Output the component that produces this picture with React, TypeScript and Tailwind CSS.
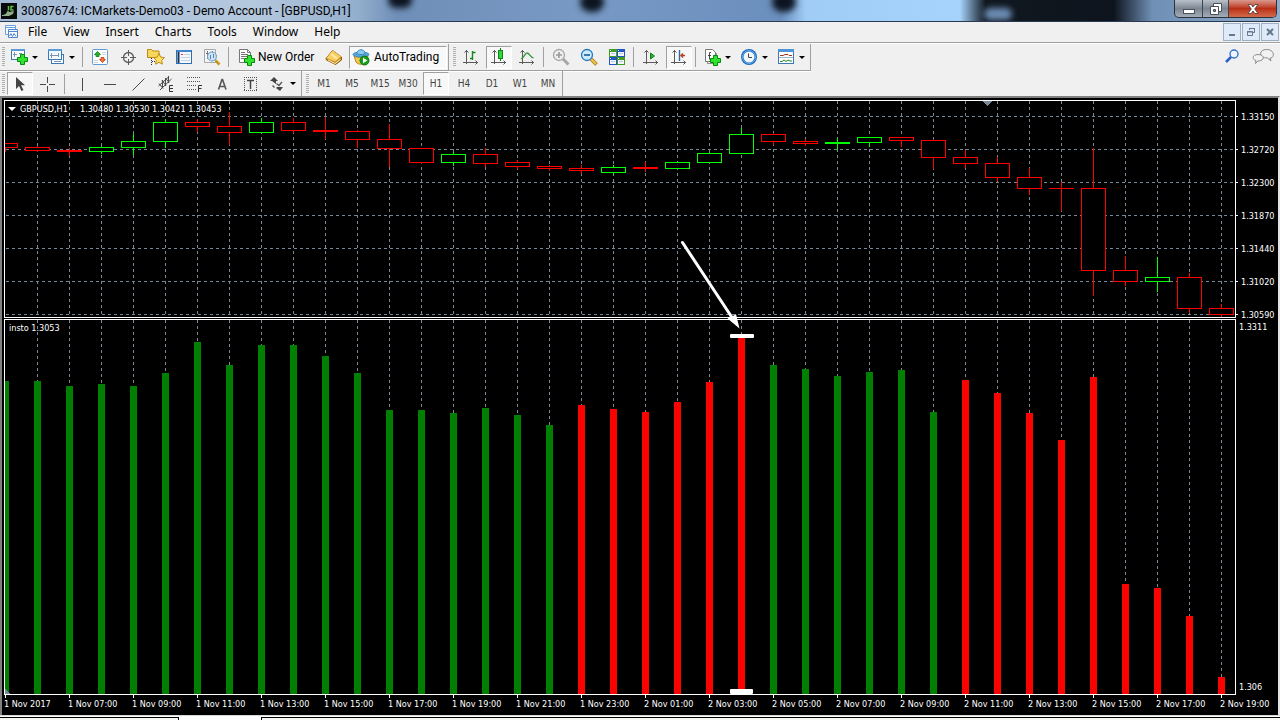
import type { ReactNode } from 'react';
import { clsx } from 'clsx';

// [direction, high, top, bottom, low], in plot pixels
type Candle = ['up' | 'down', number, number, number, number];

const CANDLES: Candle[] = [
  ['down', 143, 143, 147, 151],
  ['down', 146, 147, 150, 151],
  ['down', 148, 150, 151, 155],
  ['up', 146, 147, 151, 153],
  ['up', 134, 141, 147, 154],
  ['up', 119, 122, 141, 147],
  ['down', 119, 122, 126, 131],
  ['down', 112, 126, 132, 144],
  ['up', 118, 122, 132, 132],
  ['down', 118, 122, 130, 132],
  ['down', 117, 130, 131, 138],
  ['down', 130, 131, 139, 147],
  ['down', 124, 139, 148, 166],
  ['down', 148, 148, 162, 163],
  ['up', 152, 154, 162, 165],
  ['down', 148, 154, 163, 166],
  ['down', 160, 162, 166, 168],
  ['down', 165, 166, 168, 170],
  ['down', 165, 168, 170, 173],
  ['up', 165, 167, 172, 174],
  ['down', 162, 167, 168, 171],
  ['up', 162, 162, 168, 168],
  ['up', 152, 153, 162, 162],
  ['up', 128, 134, 153, 153],
  ['down', 133, 134, 141, 144],
  ['down', 139, 141, 143, 145],
  ['up', 138, 142, 143, 149],
  ['up', 137, 137, 142, 146],
  ['down', 137, 137, 140, 146],
  ['down', 139, 140, 157, 168],
  ['down', 150, 157, 163, 167],
  ['down', 157, 163, 177, 180],
  ['down', 168, 177, 188, 194],
  ['down', 182, 188, 188, 210],
  ['down', 148, 188, 270, 295],
  ['down', 256, 270, 281, 285],
  ['up', 257, 277, 281, 291],
  ['down', 273, 277, 308, 312],
  ['down', 304, 308, 314, 316],
];

const BAR_TOPS = [
  381, 381, 386, 384, 386, 373, 342, 365, 345, 345, 356, 373, 410, 410, 413,
  408, 415, 425, 405, 409, 412, 402, 382, 337, 365, 369, 376, 372, 370, 412,
  380, 393, 413, 440, 377, 584, 588, 616, 677,
];

const PRICES = ['1.33150', '1.32720', '1.32300', '1.31870', '1.31440', '1.31020', '1.30590'];

const TIMES = [
  '1 Nov 2017', '1 Nov 07:00', '1 Nov 09:00', '1 Nov 11:00', '1 Nov 13:00',
  '1 Nov 15:00', '1 Nov 17:00', '1 Nov 19:00', '1 Nov 21:00', '1 Nov 23:00',
  '2 Nov 01:00', '2 Nov 03:00', '2 Nov 05:00', '2 Nov 07:00', '2 Nov 09:00',
  '2 Nov 11:00', '2 Nov 13:00', '2 Nov 15:00', '2 Nov 17:00', '2 Nov 19:00',
];

const MENUS = ['File', 'View', 'Insert', 'Charts', 'Tools', 'Window', 'Help'];
const PERIODS = ['M1', 'M5', 'M15', 'M30', 'H1', 'H4', 'D1', 'W1', 'MN'];

const isRed = (i: number) => (i >= 18 && i <= 23) || i >= 30;

function Icon({ children }: { children: ReactNode }) {
  return (
    <svg width="18" height="18" viewBox="0 0 18 18" fill="none" className="shrink-0" aria-hidden="true">
      {children}
    </svg>
  );
}

function Plus({ x, y }: { x: number; y: number }) {
  return (
    <path
      transform={`translate(${x} ${y})`}
      d="M3.5.5h4v3h3v4h-3v3h-4v-3h-3v-4h3z"
      fill="#2fe32f"
      stroke="#068a0c"
    />
  );
}

function Axes() {
  return <path d="M4.5 2v14M1 14.5h15M2.5 4.5l2-2 2 2M13.5 12.5l2 2-2 2" stroke="#5a5a5a" />;
}

const icons = {
  newChart: (
    <Icon>
      <rect x="1.5" y="1.5" width="13" height="10" fill="#fff" stroke="#3a78b8" />
      <path d="M1 2h14" stroke="#5b9bd8" strokeWidth="2" />
      <path d="M4.5 4v5M3 6.5h4M9 5.5h3" stroke="#7a94ae" />
      <Plus x={7} y={6} />
    </Icon>
  ),
  profiles: (
    <Icon>
      <rect x="4.5" y="6.5" width="12" height="9" fill="#fff" stroke="#3a78b8" />
      <rect x="1.5" y="1.5" width="13" height="10" fill="#f4f9ff" stroke="#3a78b8" />
      <path d="M1 2h14" stroke="#5b9bd8" strokeWidth="2" />
      <path d="M4.5 5v5M3 7.5h9M11.5 5v4M7 13.5h7" stroke="#7a94ae" />
    </Icon>
  ),
  marketWatch: (
    <Icon>
      <rect x="1.5" y="1.5" width="15" height="15" rx="1" fill="#fff" stroke="#5a9bd8" />
      <path d="M11 4.5h4M11 6.5h4M3 12.5h4M3 14.5h4" stroke="#cfd6dd" />
      <path d="M6.5 3.5L9.500 6.5H8v2H5v-2H3.500z" fill="#27b52b" stroke="#0f7f14" strokeWidth=".8" />
      <path d="M11.5 14.5l-3-3H10v-2h3v2h1.500z" fill="#f2733a" stroke="#c0431a" strokeWidth=".8" />
    </Icon>
  ),
  dataWindow: (
    <Icon>
      <circle cx="9.5" cy="9.5" r="5" stroke="#5c5c5c" strokeWidth="1.3" />
      <path d="M9.500 2v6M9.500 11v6M2 9.500h6M11 9.500h6" stroke="#5c5c5c" />
    </Icon>
  ),
  navigator: (
    <Icon>
      <path d="M.5 9.500v-8h4L6 3h6v6.500z" fill="#f7d65c" stroke="#b98a14" />
      <path d="M4.500 10v7M5 13.500h3" stroke="#333" strokeDasharray="1 1" />
      <path
        d="M12 5.500l1.700 3.600 3.800.5-2.800 2.700.7 3.900-3.400-1.900-3.400 1.900.7-3.900-2.800-2.700 3.800-.5z"
        fill="#ffe064"
        stroke="#c08a18"
      />
    </Icon>
  ),
  terminal: (
    <Icon>
      <rect x="1.5" y="2.5" width="15" height="13" fill="#f4f8fd" stroke="#2f6fb4" />
      <path d="M2 3h14" stroke="#3f86cf" strokeWidth="2" />
      <path d="M3.500 4v11" stroke="#16355c" strokeWidth="2" />
      <path d="M6 6.500h2" stroke="#e03030" />
      <path d="M9 6.500h6M6 9.500h9M6 12.500h9" stroke="#c5d1df" />
    </Icon>
  ),
  tester: (
    <Icon>
      <path d="M1.5 1.5h11v13h-11z" fill="#f5f5f5" stroke="#a8a8a8" />
      <path d="M4.5 3v8M3 5.500h3M9.500 3v3" stroke="#777" />
      <path d="M12.500 12.500l4 4" stroke="#c8941c" strokeWidth="2.5" />
      <circle cx="9" cy="8.500" r="4.500" fill="#c5e2fa" fillOpacity=".85" stroke="#6b9cc8" />
      <path d="M7.500 7v4M10.500 6v4" stroke="#5b88ae" />
    </Icon>
  ),
  newOrder: (
    <Icon>
      <path d="M1.500 1.500h8l3 3v10h-11z" fill="#fff" stroke="#777" />
      <path d="M9.500 1.500v3h3" stroke="#777" />
      <path d="M3 4.500h4M3 6.500h7M3 8.500h6M3 10.500h3" stroke="#777" />
      <Plus x={6} y={7} />
    </Icon>
  ),
  metaEditor: (
    <Icon>
      <path d="M1 10.500L7.500 2.500 16.500 9v3l-6 4.500L1.500 12z" fill="#c98b1a" stroke="#8e5a0a" />
      <path d="M1.500 10l6-7.500 8.500 6-6 5z" fill="#f7cf63" />
      <path d="M3 12l7 3.500 5.500-4.200" stroke="#fff3c4" />
      <path d="M6 6l6.500 5" stroke="#ffe9a6" strokeWidth="2" />
    </Icon>
  ),
  autoTrading: (
    <Icon>
      <path d="M2 8c3 2 11 2 14 0l-2 6c-2 3-8 3-10 0z" fill="#f2ca4e" stroke="#b98c1c" />
      <ellipse cx="9" cy="6.500" rx="8" ry="2.500" fill="#57a6dd" stroke="#3f89c3" />
      <path d="M5 5.500c0-5 8-5 8 0-2 1.500-6 1.500-8 0z" fill="#8accf2" stroke="#3f89c3" />
      <circle cx="12.500" cy="12.500" r="4.500" fill="#18a01c" stroke="#0c7410" />
      <path d="M11 9.700l4.300 2.800-4.300 2.800z" fill="#fff" />
    </Icon>
  ),
  bars: (
    <Icon>
      <Axes />
      <path d="M10.500 3v9M10.500 4.500h3M8 10.500h2.500" stroke="#138a1b" strokeWidth="1.4" />
    </Icon>
  ),
  candles: (
    <Icon>
      <Axes />
      <path d="M10.500 0v13" stroke="#0c7a14" />
      <rect x="8.500" y="2.500" width="4" height="8" fill="#33d43b" stroke="#0c8a14" />
    </Icon>
  ),
  line: (
    <Icon>
      <Axes />
      <path d="M3 11c3-1 4-6 6-6 2.500 0 3 4 6.500 5" stroke="#2f9a36" strokeWidth="1.3" />
    </Icon>
  ),
  zoomIn: (
    <Icon>
      <path d="M11 11l5.500 5.500" stroke="#a6a6a6" strokeWidth="3" />
      <circle cx="7" cy="7" r="5.500" fill="#eee" stroke="#a6a6a6" strokeWidth="1.3" />
      <path d="M4 7h6M7 4v6" stroke="#9a9a9a" strokeWidth="1.6" />
    </Icon>
  ),
  zoomOut: (
    <Icon>
      <path d="M11 11l5.500 5.500" stroke="#a97813" strokeWidth="3.5" />
      <path d="M11 11l5 5" stroke="#f3c948" strokeWidth="1.8" />
      <circle cx="7" cy="7" r="5.500" fill="#cbeafd" stroke="#2678bd" strokeWidth="1.3" />
      <path d="M4 7h6" stroke="#2b6ea6" strokeWidth="1.8" />
    </Icon>
  ),
  tile: (
    <Icon>
      <rect x="1" y="1" width="8" height="8" fill="#3f9e1f" />
      <rect x="9" y="1" width="8" height="8" fill="#2455c4" />
      <rect x="1" y="9" width="8" height="8" fill="#2455c4" />
      <rect x="9" y="9" width="8" height="8" fill="#3f9e1f" />
      <path d="M2 4h6v4H2zM10 4h6v4h-6zM2 12h6v4H2zM10 12h6v4h-6z" fill="#f2f6fb" />
      <path d="M3 5.500h4M11 5.500h4M3 13.500h4M11 13.500h4" stroke="#b9c8da" />
      <path d="M2 2.500h1M10 2.500h1M2 10.500h1M10 10.500h1" stroke="#fff" />
    </Icon>
  ),
  autoScroll: (
    <Icon>
      <Axes />
      <path d="M8.500 5v6l4-3z" fill="#27b52b" stroke="#128018" />
    </Icon>
  ),
  shift: (
    <Icon>
      <Axes />
      <path d="M9.500 2v11" stroke="#2a6aa8" strokeWidth="1.4" />
      <path d="M15 7.500h-4M13 5.500l-2 2 2 2" stroke="#b5401c" strokeWidth="1.4" />
    </Icon>
  ),
  indicators: (
    <Icon>
      <path d="M4.500 3.500h7l2 2v10h-9z" fill="#eee" stroke="#8c8c8c" />
      <path d="M2.500 1.500h7l3 3v9h-10z" fill="#fff" stroke="#777" />
      <path d="M8 4.500H6.500v7M5 7.500h3" stroke="#444" />
      <Plus x={7} y={7} />
    </Icon>
  ),
  clock: (
    <Icon>
      <circle cx="9" cy="9" r="8" fill="#1c67bd" />
      <circle cx="9" cy="9" r="6.500" stroke="#5db0f2" />
      <circle cx="9" cy="9" r="5.500" fill="#f2f7fc" />
      <path d="M8.500 5.500v4H12" stroke="#444" />
    </Icon>
  ),
  template: (
    <Icon>
      <rect x="1.5" y="1.5" width="15" height="14" fill="#fff" stroke="#3a78b8" />
      <path d="M1 2.500h16" stroke="#4d94d8" strokeWidth="3" />
      <path d="M3 7.500h3l2-1h3l1 1h3" stroke="#a33420" />
      <path d="M2 9.500h14" stroke="#9db4cc" />
      <path d="M3 13.500h2l2-1.500 2 1.500 2-1.500 2 1h2" stroke="#278a2c" />
    </Icon>
  ),
  pointer: (
    <Icon>
      <path d="M5 2v12l3-3 2.500 5 2-1-2.500-4.800h4z" fill="#444" />
    </Icon>
  ),
  cross: (
    <Icon>
      <path d="M8.500 2v6M8.500 11v6M1 9.500h6M10 9.500h6" stroke="#4a4a4a" />
    </Icon>
  ),
  vline: (
    <Icon>
      <path d="M9.500 3v13" stroke="#4a4a4a" />
    </Icon>
  ),
  hline: (
    <Icon>
      <path d="M3 9.500h12" stroke="#4a4a4a" />
    </Icon>
  ),
  trend: (
    <Icon>
      <path d="M3.500 15.500l12-12" stroke="#4a4a4a" />
    </Icon>
  ),
  channel: (
    <Icon>
      <path d="M1.500 11l10-9M3 15L14.500 4M2 8.500l4 5M5 5.500l4 5M8.500 3l3.500 4.500M5.500 5v8M8.500 3v8M11.500 1v7" stroke="#4a4a4a" />
      <path d="M16 10.500h-3.500v6H16M12.500 13.500H16" stroke="#333" />
    </Icon>
  ),
  fibo: (
    <Icon>
      <path d="M2 2.500h14M2 6.500h14M2 10.500h9M2 14.500h9" stroke="#555" strokeDasharray="1 1" />
      <path d="M13.500 17v-6.500H17M13.500 13.500h3" stroke="#333" />
    </Icon>
  ),
  text: (
    <Icon>
      <path d="M5.500 14.500L9 4.500h.5l3.500 10M6.500 11.500H12" stroke="#555" strokeWidth="1.6" />
    </Icon>
  ),
  label: (
    <Icon>
      <path d="M3 2.500h13M3 15.500h13M3.500 2v14M15.500 2v14" stroke="#555" strokeDasharray="1 1" />
      <path d="M6 5.500h7M9.500 5v9" stroke="#444" strokeWidth="1.5" />
    </Icon>
  ),
  arrows: (
    <Icon>
      <path d="M2 6l4-4 4 4H8v3L4 6z" fill="#444" />
      <path d="M9 12h6l-3 4-4-3z" fill="#444" />
      <path d="M4.500 10.500l2 2M8.500 8.500l2.500 2 3-3.500" stroke="#555" strokeWidth="1.3" />
    </Icon>
  ),
};

type IconName = keyof typeof icons;

const Caret = () => (
  <svg width="6" height="3" viewBox="0 0 6 3" className="shrink-0" aria-hidden="true">
    <path d="M0 0h6L3 3z" fill="#000" />
  </svg>
);

const PRESSED = 'border border-t-[#a0a0a0] border-l-[#a0a0a0] border-r-white border-b-white bg-[#f8f8f8]';

function Tool({ name, label, pressed }: { name: IconName; label: string; pressed?: boolean }) {
  return (
    <button
      aria-label={label}
      className={clsx(
        'flex h-[23px] items-center justify-center',
        pressed ? 'mx-px w-[26px]' : 'w-7',
        pressed && PRESSED,
      )}
    >
      {icons[name]}
    </button>
  );
}

function DropTool({ name, label }: { name: IconName; label: string }) {
  return (
    <button aria-label={label} className="flex h-[23px] w-[37px] items-center gap-1 pl-1">
      {icons[name]}
      <Caret />
    </button>
  );
}

const Sep = () => <span className="ml-[2px] mr-[3px] h-5 w-px bg-[#a0a0a0]" />;
const Grip = () => (
  <span className="mr-px ml-[2px] h-5 w-[3px] bg-[repeating-linear-gradient(#b0b0b0_0_1px,#f0f0f0_1px_2px)]" />
);

function TitleBar() {
  return (
    <header className="relative flex h-[22px] items-center overflow-hidden border-b border-[#2a3a52] bg-[linear-gradient(90deg,#a4bad4_0,#b4c8de_20%,#93aecd_28%,#6f8fb8_31%,#7899c4_45%,#6b8fbe_61%,#a0cdf6_63%,#a6d3fb_75%,#101820_77%,#0d141d_87%,#6f8fb5_90%,#8fabc9_100%)]">
      {/* dark wedges between the blurred tabs behind the glass */}
      <span className="absolute top-[-8px] left-[388px] h-4 w-6 rounded-full bg-[#0c1420] blur-[3px]" />
      <span className="absolute top-[-8px] left-[580px] h-5 w-6 rounded-full bg-[#0c1420] blur-[3px]" />
      <span className="absolute top-[-8px] left-[772px] h-5 w-6 rounded-full bg-[#0c1420] blur-[3px]" />
      <span className="absolute top-[8px] left-[984px] h-3 w-7 rounded-full bg-[#6d8db5] blur-[3px]" />
      <svg width="16" height="16" viewBox="0 0 16 16" className="relative ml-px" aria-hidden="true">
        <rect width="16" height="16" fill="#080a08" />
        <path d="M1 12c3 0 5-2 6-5l1 2 5-1-1 3-4 2H1z" fill="#8fae8a" />
        <path d="M7.500 3v4M12.500 3.500H10v3.500h2.500" stroke="#5fc04a" strokeWidth="1.5" fill="none" />
      </svg>
      <h1 className="relative ml-1 flex-1 font-[Roboto,'Open_Sans',sans-serif] text-[12px] leading-5 whitespace-nowrap text-black">
        30087674: ICMarkets-Demo03 - Demo Account - [GBPUSD,H1]
      </h1>
      <div className="relative mr-[3px] flex h-[18px] self-start overflow-hidden rounded-b-[5px] border border-t-0 border-[#2c323a] bg-gradient-to-b from-[#b9c1ca] via-[#7d8793] to-[#a2adb8]">
        <button aria-label="Minimize" className="flex w-7 items-center justify-center border-r border-[#3b434d]">
          <svg width="12" height="12" viewBox="0 0 12 12" aria-hidden="true">
            <rect x=".5" y="6.5" width="11" height="4" fill="#fff" stroke="#4b5058" />
          </svg>
        </button>
        <button aria-label="Restore" className="flex w-[26px] items-center justify-center border-r border-[#3b434d]">
          <svg width="12" height="12" viewBox="0 0 12 12" fill="#fff" stroke="#4b5058" aria-hidden="true">
            <path d="M3.500.5h8v8h-8z" />
            <path d="M.5 3.500h8v8h-8z" />
            <path d="M3.500 6.500h2v2h-2z" fill="#7d8793" />
          </svg>
        </button>
        <button
          aria-label="Close"
          className="flex w-[47px] items-center justify-center bg-gradient-to-b from-[#d9998c] via-[#b92f16] to-[#d4694a]"
        >
          <svg width="12" height="12" viewBox="0 0 12 12" aria-hidden="true">
            <path
              d="M1 1.500h3l2 2.500 2-2.500h3L7.700 6l3.300 4.500H8L6 8l-2 2.500H1L4.300 6z"
              fill="#fff"
              stroke="#4b3a3a"
              strokeWidth=".8"
            />
          </svg>
        </button>
      </div>
    </header>
  );
}

function MdiButton({ label, children }: { label: string; children: ReactNode }) {
  return (
    <button
      aria-label={label}
      className="flex size-[18px] items-center justify-center border border-[#9db0c4] bg-[#deeafa]"
    >
      <svg width="10" height="10" viewBox="0 0 10 10" fill="none" stroke="#66788c" aria-hidden="true">
        {children}
      </svg>
    </button>
  );
}

function MenuBar() {
  return (
    <nav className="mb-px flex h-[21px] items-center border-b border-[#a0a0a0] bg-[#f0f0f0] shadow-[0_1px_0_#fff]">
      <svg width="14" height="14" viewBox="0 0 14 14" fill="none" className="ml-[5px]" aria-hidden="true">
        <path d="M.5.5h10v9H.5zM.5 2.500h10" stroke="#6ea1dd" fill="#f7fbff" />
        <path d="M3.500 4.500h9v8h-9zM3.500 6.500h9" stroke="#4f88cf" fill="#fff" />
        <path d="M4.500 11l1.500-2.500 1.500 3 1.500-3 2 3" stroke="#4f88cf" />
      </svg>
      <div className="flex flex-1 pl-px font-['Noto_Sans','Open_Sans',sans-serif] text-[12px] leading-5 text-black">
        {MENUS.map((menu) => (
          <button key={menu} className="px-2">
            {menu}
          </button>
        ))}
      </div>
      <div className="mr-px flex gap-px">
        <MdiButton label="Minimize chart">
          <path d="M2 8h6" strokeWidth="2" />
        </MdiButton>
        <MdiButton label="Restore chart">
          <path d="M3.500 3V1.500h5v4H7M3 1.500h6M1.500 4.500h5v4h-5zM1 5h6" />
        </MdiButton>
        <MdiButton label="Close chart">
          <path d="M2 2l6 6M8 2L2 8" strokeWidth="2" />
        </MdiButton>
      </div>
    </nav>
  );
}

function Toolbars() {
  return (
    <div className="flex bg-[#f0f0f0] font-[Roboto,'Open_Sans',sans-serif] text-[12px] text-black">
      <div className="flex flex-1 flex-col items-start">
        <div className="flex h-[27px] items-center border-r border-b border-[#a0a0a0] shadow-[0_1px_0_#fff]">
          <Grip />
          <DropTool name="newChart" label="New chart" />
          <DropTool name="profiles" label="Profiles" />
          <Sep />
          <Tool name="marketWatch" label="Market Watch" />
          <Tool name="dataWindow" label="Data Window" />
          <Tool name="navigator" label="Navigator" />
          <Tool name="terminal" label="Terminal" />
          <Tool name="tester" label="Strategy Tester" />
          <Sep />
          <button className="flex h-[23px] w-[88px] items-center gap-[2px] pl-[6px] whitespace-nowrap">
            {icons.newOrder}
            New Order
          </button>
          <Tool name="metaEditor" label="MetaEditor" />
          <button
            className={clsx('ml-px flex h-[23px] w-[98px] items-center gap-1 pl-[2px] whitespace-nowrap', PRESSED)}
          >
            {icons.autoTrading}
            AutoTrading
          </button>
          <span className="mr-[2px] ml-px h-[26px] w-px bg-[#a0a0a0]" />
          <Grip />
          <Tool name="bars" label="Bar chart" />
          <Tool name="candles" label="Candlesticks" pressed />
          <Tool name="line" label="Line chart" />
          <Sep />
          <Tool name="zoomIn" label="Zoom in" />
          <Tool name="zoomOut" label="Zoom out" />
          <Tool name="tile" label="Tile windows" />
          <Sep />
          <Tool name="autoScroll" label="Auto scroll" />
          <Tool name="shift" label="Chart shift" pressed />
          <Sep />
          <DropTool name="indicators" label="Indicators" />
          <DropTool name="clock" label="Periods" />
          <DropTool name="template" label="Templates" />
        </div>
        <div className="flex h-[25px] items-center border-r border-[#a0a0a0]">
          <Grip />
          <Tool name="pointer" label="Cursor" pressed />
          <Tool name="cross" label="Crosshair" />
          <Sep />
          <Tool name="vline" label="Vertical line" />
          <Tool name="hline" label="Horizontal line" />
          <Tool name="trend" label="Trendline" />
          <Tool name="channel" label="Equidistant channel" />
          <Tool name="fibo" label="Fibonacci" />
          <Tool name="text" label="Text" />
          <Tool name="label" label="Text label" />
          <DropTool name="arrows" label="Arrows" />
          <span className="mr-[2px] h-[25px] w-px bg-[#a0a0a0]" />
          <Grip />
          {PERIODS.map((period) => (
            <button
              key={period}
              className={clsx(
                "flex h-[23px] items-center justify-center font-['DejaVu_Sans_Condensed','DejaVu_Sans',sans-serif] text-[10px] text-[#444]",
                period === 'H1' ? 'mx-px w-[26px]' : 'w-7',
                period === 'H1' && PRESSED,
              )}
            >
              {period}
            </button>
          ))}
        </div>
      </div>
      <div className="flex items-start gap-3 pt-1 pr-[6px]">
        <button aria-label="Search">
          <svg width="16" height="16" viewBox="0 0 16 16" fill="none" aria-hidden="true">
            <path d="M2 14l6-6" stroke="#2a5fc4" strokeWidth="2.5" />
            <circle cx="10" cy="6" r="4" fill="#eef5ff" stroke="#3a70d0" strokeWidth="1.4" />
          </svg>
        </button>
        <button aria-label="Chat">
          <svg width="22" height="16" viewBox="0 0 22 16" fill="#f2f2f2" stroke="#8c8c8c" aria-hidden="true">
            <path d="M14.500 1.500c9 0 8 9 3.500 8.500l1 3-3.500-3c-9 0-9-8.500-1-8.500z" />
            <path d="M6 6.500c7 0 7 6.500 0 6.500l-2.500 2.500.5-3c-4-1-4-6 2-6z" />
          </svg>
        </button>
      </div>
    </div>
  );
}

function GridLines({ top, bottom, rows }: { top: number; bottom: number; rows: number }) {
  return (
    <g stroke="#778899" strokeDasharray="3 3">
      {BAR_TOPS.slice(1).map((_, i) => (
        <path key={i} d={`M${37.5 + i * 32} ${top}V${bottom}`} />
      ))}
      {Array.from({ length: rows }, (_, i) => (
        <path key={i} d={`M6 ${116.5 + i * 33}H1235`} />
      ))}
    </g>
  );
}

function PricePlot() {
  return (
    <div className="relative h-[218px] border border-white">
      <svg
        viewBox="5 101 1230 216"
        preserveAspectRatio="none"
        shapeRendering="crispEdges"
        className="block size-full"
      >
        <GridLines top={101} bottom={317} rows={PRICES.length} />
        {CANDLES.map(([dir, high, top, bottom, low], i) => {
          const x = 5 + i * 32;
          return (
            <g key={i} fill={dir === 'up' ? '#00ff00' : '#ff0000'}>
              <rect x={x} y={high} width="1" height={low - high + 1} />
              <rect x={x - 12} y={top} width="25" height={bottom - top + 1} />
              <rect x={x - 11} y={top + 1} width="23" height={Math.max(0, bottom - top - 1)} fill="#000" />
            </g>
          );
        })}
        <path d="M982 101h11l-5.500 5z" fill="#778899" />
      </svg>
      <p className="absolute top-0 left-[3px] flex h-4 items-center text-white">
        <svg width="8" height="4" viewBox="0 0 8 4" className="mr-1" aria-hidden="true">
          <path d="M0 0h8L4 4z" fill="#fff" />
        </svg>
        <span className="w-[60px]">GBPUSD,H1</span>
        <span>1.30480 1.30530 1.30421 1.30453</span>
      </p>
    </div>
  );
}

function IndicatorPlot() {
  return (
    <div className="relative mt-px min-h-0 flex-1 border border-white">
      <svg
        viewBox="5 320 1230 374"
        preserveAspectRatio="none"
        shapeRendering="crispEdges"
        className="block size-full"
      >
        <GridLines top={320} bottom={694} rows={0} />
        {BAR_TOPS.map((top, i) => (
          <rect key={i} x={2 + i * 32} y={top} width="7" height={694 - top} fill={isRed(i) ? '#ff0000' : '#008000'} />
        ))}
        <path d="M5 689l5 5H5z" fill="#778899" />
      </svg>
      <p className="absolute top-0 left-1 flex h-4 items-center text-white">insto 1.3053</p>
    </div>
  );
}

function ChartWindow() {
  return (
    <main className="flex min-h-0 flex-1 border-t-2 border-r-2 border-l-2 border-t-[#808080] border-r-[#e3e3e3] border-l-[#808080] bg-black pt-[2px] pl-[2px] font-['DejaVu_Sans_Condensed','DejaVu_Sans',sans-serif] text-[9px] leading-4">
      <div className="flex min-w-0 flex-1 flex-col">
        <div className="relative flex min-h-0 flex-1 flex-col">
          <PricePlot />
          <IndicatorPlot />
          <svg
            viewBox="4 100 1232 595"
            preserveAspectRatio="none"
            className="pointer-events-none absolute inset-0 size-full"
            aria-hidden="true"
          >
            <path d="M682.500 242.500L733 319" stroke="#fff" strokeWidth="3" strokeLinecap="round" />
            <path d="M739.500 328.500L727.500 318.500l4-1.500 4.500-3z" fill="#fff" />
            <rect x="730" y="334" width="24" height="4" rx="1" fill="#fff" />
            <rect x="730" y="689" width="23" height="5" rx="1" fill="#fff" />
          </svg>
        </div>
        <div className="mx-px grid h-5 grid-cols-[repeat(19,minmax(0,64fr))_minmax(0,14fr)] text-white">
          {TIMES.map((time) => (
            <div key={time} className="whitespace-nowrap">
              <div className="h-[3px] w-px bg-white" />
              <div className="-ml-px leading-3">{time}</div>
            </div>
          ))}
        </div>
      </div>
      <div className="flex w-[42px] shrink-0 flex-col text-white">
        <div className="h-[218px]">
          {PRICES.map((price) => (
            <div key={price} className="flex h-[33px] items-center gap-[3px]">
              <span className="h-px w-[2px] bg-white" />
              {price}
            </div>
          ))}
        </div>
        <div className="flex flex-1 flex-col justify-between pt-px pb-5 pl-[3px]">
          <span>1.3311</span>
          <span>1.306</span>
        </div>
      </div>
    </main>
  );
}

export default function App() {
  return (
    <div className="flex h-screen flex-col overflow-hidden bg-[#f0f0f0]">
      <TitleBar />
      <MenuBar />
      <Toolbars />
      <ChartWindow />
      <footer className="flex h-[5px] border-t border-[#d8d8d8] bg-white pt-px">
        <div className="w-[179px] border-t border-r border-black bg-[#f7f8f3]" />
        <div className="w-[82px]" />
        <div className="flex-1 border-t border-l border-black bg-[#f7f8f3]" />
      </footer>
    </div>
  );
}
